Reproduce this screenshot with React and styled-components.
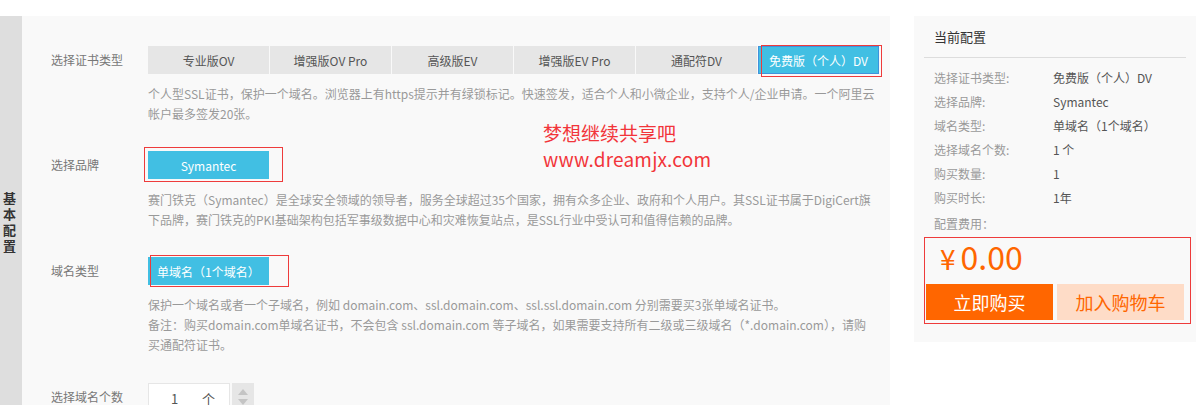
import React, { useState } from "react";
import styled, { createGlobalStyle } from "styled-components";

const GlobalStyle = createGlobalStyle`
  html, body {
    margin: 0;
    padding: 0;
    background: #fff;
  }
  body {
    font-family: "Noto Sans CJK SC", "Liberation Sans", sans-serif;
    font-size: 12px;
    color: #555;
  }
`;

const certTypes = [
  "专业版OV",
  "增强版OV Pro",
  "高级版EV",
  "增强版EV Pro",
  "通配符DV",
  "免费版（个人）DV",
];

const summary = [
  ["选择证书类型:", "免费版（个人）DV"],
  ["选择品牌:", "Symantec"],
  ["域名类型:", "单域名（1个域名）"],
  ["选择域名个数:", "1 个"],
  ["购买数量:", "1"],
  ["购买时长:", "1年"],
];

function App() {
  const [active, setActive] = useState(5);

  return (
    <>
      <GlobalStyle />
      <Page>
        <MainPanel>
          <SideTab>基本配置</SideTab>
          <Content>
            <Watermark>
              <span>梦想继续共享吧</span>
              <span className="url">www.dreamjx.com</span>
            </Watermark>

            <FieldRow>
              <Label>选择证书类型</Label>
              <Field>
                <Tabs>
                  {certTypes.map((t, i) =>
                    i === active ? (
                      <Marked key={t} $t={-1} $l={3} $r={-3} $b={-3}>
                        <Tab $active>{t}</Tab>
                      </Marked>
                    ) : (
                      <Tab key={t} onClick={() => setActive(i)}>
                        {t}
                      </Tab>
                    )
                  )}
                </Tabs>
                <Desc $top={10}>
                  个人型SSL证书，保护一个域名。浏览器上有https提示并有绿锁标记。快速签发，适合个人和小微企业，支持个人/企业申请。一个阿里云帐户最多签发20张。
                </Desc>
              </Field>
            </FieldRow>

            <FieldRow $top={27}>
              <Label>选择品牌</Label>
              <Field>
                <Marked $t={-4} $l={-4} $r={-14} $b={-3}>
                  <Chip>Symantec</Chip>
                </Marked>
                <Desc $top={11}>
                  赛门铁克（Symantec）是全球安全领域的领导者，服务全球超过35个国家，拥有众多企业、政府和个人用户。其SSL证书属于DigiCert旗下品牌，赛门铁克的PKI基础架构包括军事级数据中心和灾难恢复站点，是SSL行业中受认可和值得信赖的品牌。
                </Desc>
              </Field>
            </FieldRow>

            <FieldRow $top={27}>
              <Label>域名类型</Label>
              <Field>
                <Marked $t={-2} $l={2} $r={-20} $b={-2}>
                  <Chip $left>单域名（1个域名）</Chip>
                </Marked>
                <Desc $top={10} $width={728}>
                  保护一个域名或者一个子域名，例如 domain.com、ssl.domain.com、ssl.ssl.domain.com 分别需要买3张单域名证书。
                  <br />
                  备注：购买domain.com单域名证书，不会包含 ssl.domain.com 等子域名，如果需要支持所有二级或三级域名（*.domain.com），请购买通配符证书。
                </Desc>
              </Field>
            </FieldRow>

            <FieldRow $top={28}>
              <Label>选择域名个数</Label>
              <Field>
                <Counter>
                  <CountBox>
                    <span>1</span>
                    <span>个</span>
                  </CountBox>
                  <Stepper>
                    <svg width="10" height="6" viewBox="0 0 10 6">
                      <path d="M0 6 L5 0 L10 6 Z" fill="#c4c4c4" />
                    </svg>
                    <svg width="10" height="6" viewBox="0 0 10 6">
                      <path d="M0 0 L5 6 L10 0 Z" fill="#c4c4c4" />
                    </svg>
                  </Stepper>
                </Counter>
              </Field>
            </FieldRow>
          </Content>
        </MainPanel>

        <SummaryPanel>
          <SummaryTitle>当前配置</SummaryTitle>
          <SummaryList>
            {summary.map(([k, v]) => (
              <SummaryRow key={k}>
                <SummaryKey>{k}</SummaryKey>
                <SummaryValue>{v}</SummaryValue>
              </SummaryRow>
            ))}
            <SummaryRow $top={2}>
              <SummaryKey>配置费用：</SummaryKey>
            </SummaryRow>
          </SummaryList>
          <PriceBox>
            <Price>
              <span className="yen">¥</span>0.00
            </Price>
            <Actions>
              <BuyButton>立即购买</BuyButton>
              <BuyButton $light>加入购物车</BuyButton>
            </Actions>
          </PriceBox>
        </SummaryPanel>
      </Page>
    </>
  );
}

const Page = styled.div`
  display: flex;
  align-items: flex-start;
  padding-top: 16px;
  width: 1199px;
`;

const MainPanel = styled.section`
  display: flex;
  width: 890px;
  flex-shrink: 0;
  min-height: 420px;
`;

const SideTab = styled.div`
  width: 22px;
  flex-shrink: 0;
  background: #dedede;
  color: #333;
  font-size: 13px;
  font-weight: bold;
  line-height: 16px;
  box-sizing: border-box;
  padding: 174px 6px 0 3px;
  word-break: break-all;
`;

const Content = styled.div`
  position: relative;
  flex: 1;
  background: #f9f9f9;
  padding: 30px 0 20px 29px;
`;

const Watermark = styled.div`
  position: absolute;
  left: 521px;
  top: 106px;
  display: flex;
  flex-direction: column;
  gap: 4px;
  color: #f2353a;
  font-size: 19px;
  line-height: 22px;
  pointer-events: none;

  .url {
    font-size: 19px;
    letter-spacing: 0.2px;
  }
`;

const FieldRow = styled.div`
  display: flex;
  margin-top: ${(p) => p.$top || 0}px;
`;

const Label = styled.div`
  width: 97px;
  flex-shrink: 0;
  line-height: 28px;
  color: #777;
  font-size: 12px;
`;

const Field = styled.div`
  width: 732px;
`;

const Tabs = styled.div`
  display: flex;
  gap: 1px;
`;

const Tab = styled.button`
  width: 121px;
  height: 28px;
  box-sizing: border-box;
  padding: 0;
  font-family: inherit;
  font-size: 12px;
  cursor: pointer;
  background: ${(p) => (p.$active ? "#41bfe3" : "#e6e6e6")};
  color: ${(p) => (p.$active ? "#fff" : "#555")};
  border: ${(p) => (p.$active ? "1px solid #3f93dc" : "none")};
`;

const Marked = styled.div`
  position: relative;
  display: inline-flex;

  &::after {
    content: "";
    position: absolute;
    top: ${(p) => p.$t}px;
    left: ${(p) => p.$l}px;
    right: ${(p) => p.$r}px;
    bottom: ${(p) => p.$b}px;
    border: 1px solid #ee3b3b;
    pointer-events: none;
  }
`;

const Chip = styled.div`
  width: 121px;
  height: 28px;
  box-sizing: border-box;
  display: flex;
  align-items: center;
  justify-content: ${(p) => (p.$left ? "flex-start" : "center")};
  padding-left: ${(p) => (p.$left ? "9px" : "0")};
  background: #41bfe3;
  color: #fff;
  font-size: 12px;
`;

const Desc = styled.p`
  margin: ${(p) => p.$top || 0}px 0 0;
  max-width: ${(p) => (p.$width ? `${p.$width}px` : "none")};
  color: #999;
  font-size: 12px;
  line-height: 20px;
`;

const Counter = styled.div`
  display: flex;
  gap: 2px;
  height: 30px;
`;

const CountBox = styled.div`
  width: 82px;
  box-sizing: border-box;
  background: #fff;
  border: 1px solid #e6e6e6;
  display: flex;
  align-items: center;
  padding: 0 14px 0 22px;
  justify-content: space-between;
  color: #555;
  font-size: 13px;
`;

const Stepper = styled.div`
  width: 22px;
  background: #e6e6e6;
  display: flex;
  flex-direction: column;
  align-items: center;
  justify-content: flex-start;
  gap: 4px;
  padding-top: 6px;
  box-sizing: border-box;
`;

const SummaryPanel = styled.aside`
  width: 282px;
  flex-shrink: 0;
  margin-left: 24px;
  background: #f9f9f9;
  padding-bottom: 18px;
`;

const SummaryTitle = styled.h3`
  margin: 0 10px;
  padding: 10px 10px 9px;
  font-size: 13px;
  font-weight: normal;
  color: #333;
  line-height: 22px;
  border-bottom: 1px solid #ddd;
`;

const SummaryList = styled.div`
  padding: 8px 20px 0;
`;

const SummaryRow = styled.div`
  display: flex;
  line-height: 24px;
  margin-top: ${(p) => p.$top || 0}px;
`;

const SummaryKey = styled.span`
  width: 119px;
  color: #999;
`;

const SummaryValue = styled.span`
  color: #555;
`;

const PriceBox = styled.div`
  margin: 1px 5px 0 10px;
  border: 1px solid #ee3b3b;
  padding: 0 6px 3px 1px;
`;

const Price = styled.div`
  color: #ff6600;
  font-size: 32px;
  line-height: 36px;
  padding-left: 14px;

  .yen {
    font-size: 28px;
    margin-right: 5px;
  }
`;

const Actions = styled.div`
  display: flex;
  gap: 4px;
  margin-top: 8px;
`;

const BuyButton = styled.button`
  width: 127px;
  height: 36px;
  border: none;
  padding: 0;
  font-family: inherit;
  font-size: 18px;
  cursor: pointer;
  background: ${(p) => (p.$light ? "#fedcc7" : "#ff6600")};
  color: ${(p) => (p.$light ? "#ff6600" : "#fff")};
`;

export default App;
